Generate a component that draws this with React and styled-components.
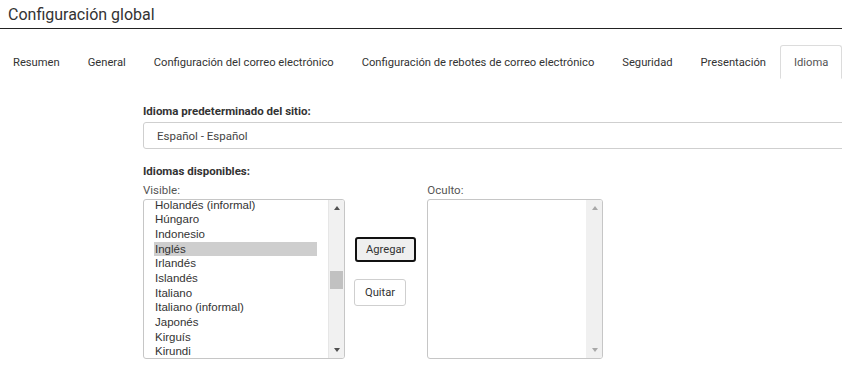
import React from 'react'
import styled, { createGlobalStyle } from 'styled-components'

const Global = createGlobalStyle`
  body{
    margin:0;
    background:#fff;
    font-family:Roboto, "Liberation Sans", Arial, sans-serif;
    color:#333;
    overflow:hidden;
  }
`;

const Page = styled.div`
  width:842px;
  height:372px;
  overflow:hidden;
`;

const Header = styled.header`
  height:28px;
  display:flex;
  align-items:center;
  padding-left:8px;
  border-bottom:1px solid #222;
`;

const Title = styled.h1`
  margin:0;
  font-size:16px;
  font-weight:400;
  color:#333;
`;

const Tabs = styled.nav`
  display:flex;
  margin-top:16px;
  height:33px;
  border-bottom:1px solid #dcdcdc;
`;

const Tab = styled.div`
  padding:0 13px;
  font-size:11.2px;
  color:${props => props.active ? '#555' : '#333'};
  white-space:nowrap;
  border:1px solid ${props => props.active ? '#dcdcdc' : 'transparent'};
  border-bottom-color:${props => props.active ? '#fff' : 'transparent'};
  border-radius:3px 3px 0 0;
  background:#fff;
  margin-bottom:-1px;
  height:34px;
  box-sizing:border-box;
  line-height:33px;

  &:first-child{
    margin-left:-1px;
  }
`;

const Content = styled.section`
  padding:25px 0 0 143px;
`;

const Label = styled.div`
  font-size:11.5px;
  line-height:14px;
  font-weight:${props => props.bold ? 700 : 400};
  color:${props => props.bold ? '#333' : '#555'};
  margin-top:${props => props.top || 0}px;
`;

const Select = styled.div`
  margin-top:4px;
  width:720px;
  height:27px;
  box-sizing:border-box;
  border:1px solid #cfcfcf;
  border-radius:3px;
  padding-left:13px;
  display:flex;
  align-items:center;
  font-size:11.5px;
  color:#444;
`;

const Lists = styled.div`
  display:flex;
  align-items:flex-start;
  margin-top:5px;
`;

const Column = styled.div`
  display:flex;
  flex-direction:column;
`;

const ListBox = styled.div`
  margin-top:2px;
  width:${props => props.w}px;
  height:160px;
  box-sizing:border-box;
  border:1px solid #c6c6c6;
  border-radius:3px;
  display:flex;
  overflow:hidden;
`;

const Options = styled.div`
  flex:1;
  padding:0 11px 0 10px;
  margin-top:-2.5px;
  overflow:hidden;
`;

const Option = styled.div`
  height:14.7px;
  line-height:14.7px;
  padding-left:1px;
  font-family:"Liberation Sans", Arial, sans-serif;
  font-size:11.5px;
  color:#333;
  white-space:nowrap;
  background:${props => props.selected ? '#cecece' : 'transparent'};
`;

const ScrollBar = styled.div`
  width:15px;
  display:flex;
  flex-direction:column;
  align-items:center;
  background:${props => props.disabled ? '#f0f0f0' : '#f1f1f1'};
  border-left:1px solid ${props => props.disabled ? '#f0f0f0' : '#e6e6e6'};
`;

const Arrow = styled.div`
  height:16px;
  display:flex;
  align-items:center;
  justify-content:center;

  &::before{
    content:'';
    border-left:3.5px solid transparent;
    border-right:3.5px solid transparent;
    ${props => props.down
      ? `border-top:4px solid ${props.disabled ? '#a8a8a8' : '#505050'};`
      : `border-bottom:4px solid ${props.disabled ? '#a8a8a8' : '#505050'};`}
  }
`;

const Track = styled.div`
  flex:1;
  width:100%;
  display:flex;
  justify-content:center;
`;

const Thumb = styled.div`
  width:13px;
  height:18px;
  background:#c1c1c1;
  margin-top:${props => props.offset}px;
`;

const Buttons = styled.div`
  display:flex;
  flex-direction:column;
  align-items:flex-start;
  padding-top:54px;
  margin:0 11px 0 9px;
  gap:17px;
`;

const Button = styled.button`
  font-family:Roboto, "Liberation Sans", Arial, sans-serif;
  font-size:11.2px;
  color:#333;
  height:${props => props.focused ? 25 : 27}px;
  padding:0 ${props => props.focused ? 9 : 10}px;
  background:${props => props.focused ? '#efefef' : '#fff'};
  border:${props => props.focused ? '2px solid #111' : '1px solid #cfcfcf'};
  border-radius:3px;
  margin-left:${props => props.focused ? 1 : 0}px;
`;

const visible = [
  'Holandés (informal)', 'Húngaro', 'Indonesio', 'Inglés', 'Irlandés',
  'Islandés', 'Italiano', 'Italiano (informal)', 'Japonés', 'Kirguís', 'Kirundi',
]

const tabs = [
  'Resumen', 'General', 'Configuración del correo electrónico',
  'Configuración de rebotes de correo electrónico', 'Seguridad', 'Presentación', 'Idioma',
]

const App = () => {
  return (
    <>
      <Global />
      <Page>
        <Header>
          <Title>Configuración global</Title>
        </Header>
        <Tabs>
          {tabs.map((t) => (
            <Tab key={t} active={t === 'Idioma'}>{t}</Tab>
          ))}
        </Tabs>
        <Content>
          <Label bold>Idioma predeterminado del sitio:</Label>
          <Select>Español - Español</Select>
          <Label bold top={15}>Idiomas disponibles:</Label>
          <Lists>
            <Column>
              <Label>Visible:</Label>
              <ListBox w={202}>
                <Options>
                  {visible.map((v) => (
                    <Option key={v} selected={v === 'Inglés'}>{v}</Option>
                  ))}
                </Options>
                <ScrollBar>
                  <Arrow />
                  <Track><Thumb offset={55} /></Track>
                  <Arrow down />
                </ScrollBar>
              </ListBox>
            </Column>
            <Buttons>
              <Button focused>Agregar</Button>
              <Button>Quitar</Button>
            </Buttons>
            <Column>
              <Label>Oculto:</Label>
              <ListBox w={176}>
                <Options />
                <ScrollBar disabled>
                  <Arrow disabled />
                  <Track />
                  <Arrow down disabled />
                </ScrollBar>
              </ListBox>
            </Column>
          </Lists>
        </Content>
      </Page>
    </>
  )
}

export default App
